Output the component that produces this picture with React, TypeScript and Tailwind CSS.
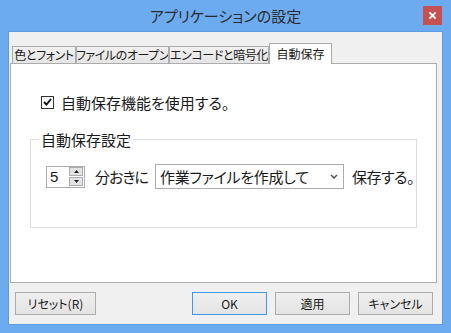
import React from 'react';

const jp = "font-['Noto_Sans_CJK_JP','Noto_Sans',sans-serif] [font-feature-settings:'palt'] whitespace-nowrap";

const tabs = [
  { label: '色とフォント', w: 'w-[64px]' },
  { label: 'ファイルのオープン', w: 'w-[93px]' },
  { label: 'エンコードと暗号化', w: 'w-[100px]' },
];

function Button({ children, w, primary }: { children: React.ReactNode; w: string; primary?: boolean }) {
  return (
    <button
      className={`${w} h-[23px] flex items-center justify-center text-[12px] text-[#1a1a1a] bg-gradient-to-b from-[#efefef] to-[#e3e3e3] border ${
        primary ? 'border-[#3c9ae8]' : 'border-[#acacac]'
      }`}
    >
      {children}
    </button>
  );
}

export default function App() {
  return (
    <div className={`w-[451px] h-[333px] bg-[#6cabf0] flex flex-col ${jp}`}>
      {/* Title bar */}
      <div className="relative h-[31px] flex items-center justify-center shrink-0">
        <span className="text-[15px] text-[#2b2b2b] leading-none">アプリケーションの設定</span>
        <div className="absolute top-[6px] right-[9px] w-[19px] h-[19px] bg-[#c75050] flex items-center justify-center">
          <svg width="7" height="7" viewBox="0 0 7 7">
            <path d="M1 1 L6 6 M6 1 L1 6" stroke="#fff" strokeWidth="1.8" strokeLinecap="square" />
          </svg>
        </div>
      </div>

      {/* Client area */}
      <div className="mx-[8px] mb-[8px] flex-1 bg-[#f0f0f0] border border-[#5b9be2] flex flex-col">
        {/* Tabs */}
        <div className="h-[31px] pl-[3px] flex items-end shrink-0">
          {tabs.map((t) => (
            <div
              key={t.label}
              className={`${t.w} h-[17px] border-t border-l border-r border-[#acacac] bg-gradient-to-b from-[#f0f0f0] to-[#e5e5e5] flex items-center justify-center text-[12px] tracking-[-0.4px] text-[#1a1a1a] leading-none overflow-hidden`}
            >
              {t.label}
            </div>
          ))}
          <div className="relative z-10 w-[63px] h-[21px] -mb-px border-t border-l border-r border-[#acacac] bg-white flex items-center justify-center text-[12px] text-[#1a1a1a] leading-none">
            自動保存
          </div>
        </div>

        {/* Panel */}
        <div className="ml-[1px] mr-[5px] h-[220px] bg-white border border-[#acacac] flex flex-col shrink-0">
          <div className="mt-[28px] h-[20px] pl-[30px] flex items-center gap-[7px]">
            <div className="w-[13px] h-[13px] border border-[#333] bg-white flex items-center justify-center">
              <svg width="9" height="8" viewBox="0 0 9 8">
                <path d="M1 4 L3.5 6.5 L8 1" fill="none" stroke="#111" strokeWidth="1.9" />
              </svg>
            </div>
            <span className="text-[15px] text-[#1a1a1a] leading-none">自動保存機能を使用する。</span>
          </div>

          <fieldset className="mt-[17px] mx-[19px] border border-[#dcdcdc] pb-[38px]">
            <legend className="ml-[8px] px-[2px] h-[20px] flex items-center text-[15px] text-[#1a1a1a] leading-none">
              自動保存設定
            </legend>
            <div className="mt-[15px] h-[25px] pl-[15px] flex items-center">
              {/* Spinner */}
              <div className="w-[39px] h-[22px] border border-[#abadb3] bg-white flex items-center justify-between pl-[3px] pr-[1px] shrink-0">
                <span className="text-[15px] leading-none text-[#1a1a1a] font-['Liberation_Sans',sans-serif]">5</span>
                <div className="flex flex-col gap-px">
                  <div className="w-[14px] h-[9px] bg-[#e3e3e3] border border-[#acacac] flex items-center justify-center">
                    <svg width="5" height="3" viewBox="0 0 5 3">
                      <path d="M0 3 L2.5 0 L5 3 Z" fill="#222" />
                    </svg>
                  </div>
                  <div className="w-[14px] h-[9px] bg-[#e3e3e3] border border-[#acacac] flex items-center justify-center">
                    <svg width="5" height="3" viewBox="0 0 5 3">
                      <path d="M0 0 L2.5 3 L5 0 Z" fill="#222" />
                    </svg>
                  </div>
                </div>
              </div>
              <span className="ml-[10px] w-[60px] shrink-0 text-[15px] tracking-[-1px] text-[#1a1a1a] leading-none">分おきに</span>
              {/* Dropdown */}
              <div className="w-[189px] h-[25px] shrink-0 border border-[#acacac] bg-white flex items-center justify-between pl-[4px] pr-[5px]">
                <span className="text-[15px] tracking-[-0.3px] text-[#1a1a1a] leading-none">作業ファイルを作成して</span>
                <svg width="8" height="5" viewBox="0 0 8 5">
                  <path d="M1 1 L4 4 L7 1" fill="none" stroke="#555" strokeWidth="1.5" />
                </svg>
              </div>
              <span className="ml-[8px] text-[15px] tracking-[-0.5px] text-[#1a1a1a] leading-none">保存する。</span>
            </div>
          </fieldset>
        </div>

        {/* Buttons */}
        <div className="mt-[9px] pl-[6px] pr-[9px] flex items-center justify-between">
          <Button w="w-[81px]">リセット(R)</Button>
          <div className="flex gap-[8px]">
            <Button w="w-[75px]" primary>
              OK
            </Button>
            <Button w="w-[75px]">適用</Button>
            <Button w="w-[75px]">キャンセル</Button>
          </div>
        </div>
      </div>
    </div>
  );
}
